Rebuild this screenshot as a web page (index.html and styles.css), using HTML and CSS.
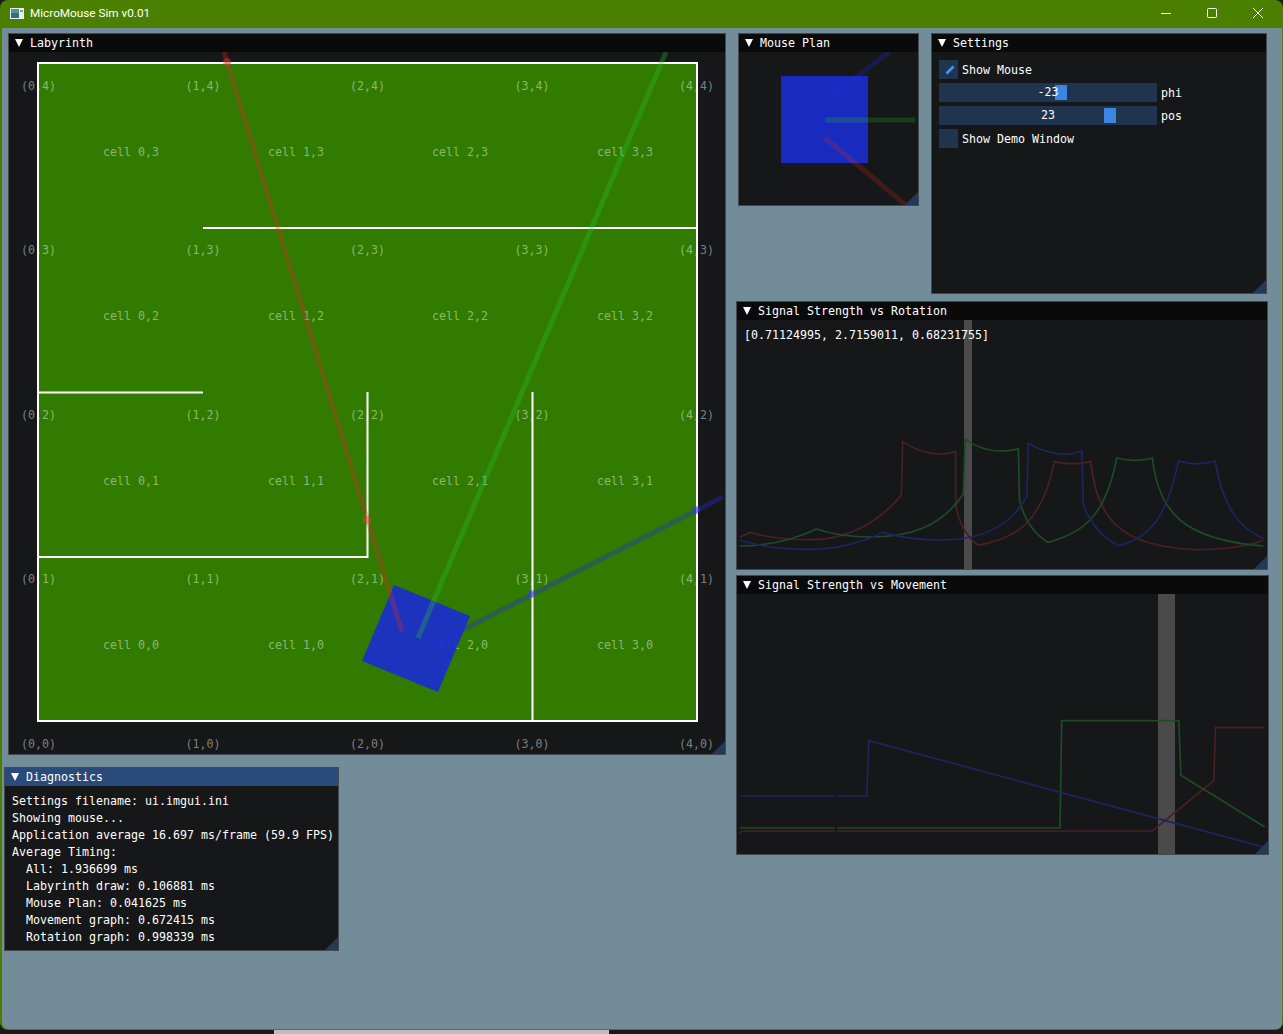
FILE: index.html
```html
<!DOCTYPE html>
<html lang="en">
<head>
<meta charset="UTF-8">
<meta name="viewport" content="width=device-width, initial-scale=1.0">
<title>MicroMouse Sim v0.01</title>
<link rel="stylesheet" href="styles.css">
</head>
<body>

<div class="app">
    <div class="titlebar">
        <svg class="app-icon" width="14" height="11" viewBox="0 0 14 11">
            <rect x="0" y="0" width="14" height="11" fill="#e8eef0"/>
            <rect x="1" y="1" width="8" height="9" fill="#2f6f86"/>
            <rect x="1" y="1" width="8" height="4" fill="#4f9a8c"/>
            <rect x="10" y="2" width="3" height="2" fill="#8a9aa4"/>
        </svg>
        <span class="app-name">MicroMouse Sim v0.01</span>
        <div class="caption-buttons">
            <svg class="caption-btn" width="10" height="10" viewBox="0 0 10 10"><path d="M0 5.5H10" stroke="#fff" fill="none"/></svg>
            <svg class="caption-btn" width="10" height="10" viewBox="0 0 10 10"><rect x="0.5" y="0.5" width="9" height="9" rx="1" stroke="#fff" fill="none"/></svg>
            <svg class="caption-btn" width="10" height="10" viewBox="0 0 10 10"><path d="M0 0L10 10M10 0L0 10" stroke="#fff" fill="none"/></svg>
        </div>
    </div>

    <div class="desk">

        <!-- labyrinth -->
        <div class="win win-labyrinth">
            <div class="win-title"><i class="arrow"></i>Labyrinth</div>
            <svg class="win-canvas" viewBox="9 52 716 702">
                <rect class="floor" x="39" y="63" width="658" height="658"/>
                <path class="wall" d="M38 63H697V721H38ZM203 228H697M38 392.5H203M367.5 392V557H38M532.5 392V721"/>

                <g class="lbl">
                    <text x="38.5" y="90">(0,4)</text><text x="203" y="90">(1,4)</text><text x="367.5" y="90">(2,4)</text><text x="532" y="90">(3,4)</text><text x="696.5" y="90">(4,4)</text>
                    <text x="38.5" y="254">(0,3)</text><text x="203" y="254">(1,3)</text><text x="367.5" y="254">(2,3)</text><text x="532" y="254">(3,3)</text><text x="696.5" y="254">(4,3)</text>
                    <text x="38.5" y="419">(0,2)</text><text x="203" y="419">(1,2)</text><text x="367.5" y="419">(2,2)</text><text x="532" y="419">(3,2)</text><text x="696.5" y="419">(4,2)</text>
                    <text x="38.5" y="583">(0,1)</text><text x="203" y="583">(1,1)</text><text x="367.5" y="583">(2,1)</text><text x="532" y="583">(3,1)</text><text x="696.5" y="583">(4,1)</text>
                    <text x="38.5" y="748">(0,0)</text><text x="203" y="748">(1,0)</text><text x="367.5" y="748">(2,0)</text><text x="532" y="748">(3,0)</text><text x="696.5" y="748">(4,0)</text>

                    <text x="131" y="156">cell 0,3</text><text x="296" y="156">cell 1,3</text><text x="460" y="156">cell 2,3</text><text x="625" y="156">cell 3,3</text>
                    <text x="131" y="320">cell 0,2</text><text x="296" y="320">cell 1,2</text><text x="460" y="320">cell 2,2</text><text x="625" y="320">cell 3,2</text>
                    <text x="131" y="485">cell 0,1</text><text x="296" y="485">cell 1,1</text><text x="460" y="485">cell 2,1</text><text x="625" y="485">cell 3,1</text>
                    <text x="131" y="649">cell 0,0</text><text x="296" y="649">cell 1,0</text><text x="460" y="649">cell 2,0</text><text x="625" y="649">cell 3,0</text>
                </g>

                <polygon class="mouse" points="394,585 470,616 438,692 362,661"/>
                <path class="beam beam-r" d="M402 632L224 52"/>
                <path class="beam beam-g" d="M418 638L666 52"/>
                <path class="beam beam-b" d="M433 645L723 497"/>
                <circle class="hit-r" cx="227" cy="62" r="4"/>
                <circle class="hit-r" cx="367" cy="520" r="4"/>
                <circle class="hit-b" cx="531" cy="594" r="4"/>
                <circle class="hit-b" cx="696" cy="510" r="4"/>
            </svg>
            <i class="grip"></i>
        </div>

        <!-- mouse plan -->
        <div class="win win-plan">
            <div class="win-title"><i class="arrow"></i>Mouse Plan</div>
            <svg class="win-canvas" viewBox="739 52 179 153">
                <rect class="mouse" x="781" y="76" width="87" height="87"/>
                <path class="beam beam-r" d="M825 138L907 206"/>
                <path class="beam beam-g" d="M825 120H915"/>
                <path class="beam beam-b" d="M825 102L889 52"/>
            </svg>
            <i class="grip"></i>
        </div>

        <!-- settings -->
        <div class="win win-settings">
            <div class="win-title"><i class="arrow"></i>Settings</div>
            <div class="settings-body">
                <div class="row">
                    <span class="check">
                        <svg width="19" height="19" viewBox="0 0 19 19"><path d="M7.5 13.5L14.5 6.5" stroke="#4296fa" stroke-width="2.6" fill="none"/></svg>
                    </span>
                    <span>Show Mouse</span>
                </div>
                <div class="row">
                    <div class="slider"><span class="slider-val">-23</span><i class="grab grab-phi"></i></div>
                    <span>phi</span>
                </div>
                <div class="row">
                    <div class="slider"><span class="slider-val">23</span><i class="grab grab-pos"></i></div>
                    <span>pos</span>
                </div>
                <div class="row">
                    <span class="check"></span>
                    <span>Show Demo Window</span>
                </div>
            </div>
            <i class="grip"></i>
        </div>

        <!-- rotation graph -->
        <div class="win win-rotation">
            <div class="win-title"><i class="arrow"></i>Signal Strength vs Rotation</div>
            <div class="graph-body">
                <i class="cursor cursor-rot"></i>
                <div class="readout">[0.71124995, 2.7159011, 0.68231755]</div>
                <svg class="graph" viewBox="20 90 1503 747" preserveAspectRatio="none">
                    <path class="trace trace-r" d="M28 742L57 727C100 742 160 749 230 749C330 749 420 700 486 615L490 455C530 485 590 503 640 485L640 640C645 690 670 740 703 766C810 745 885 700 920 515Q970 528 1023 515C1040 680 1100 770 1320 779C1400 779 1470 768 1513 750"/>
                    <path class="trace trace-g" d="M28 768C100 768 170 755 245 717C290 733 340 741 400 741C510 741 600 710 662 612L667 448C700 472 750 495 818 476L821 630C835 690 860 730 902 757C1000 730 1065 680 1097 504Q1150 518 1198 504C1215 670 1290 750 1513 768"/>
                    <path class="trace trace-b" d="M28 750C90 772 160 778 230 778C310 778 380 755 435 727C480 742 540 750 600 750C700 750 790 720 842 620L846 460C890 488 950 503 998 483L1002 642C1020 700 1060 745 1102 767C1190 745 1240 680 1272 513Q1325 530 1376 513C1395 640 1440 715 1513 745"/>
                </svg>
            </div>
            <i class="grip"></i>
        </div>

        <!-- movement graph -->
        <div class="win win-movement">
            <div class="win-title"><i class="arrow"></i>Signal Strength vs Movement</div>
            <div class="graph-body">
                <i class="cursor cursor-mov"></i>
                <svg class="graph" viewBox="20 72 1506 780" preserveAspectRatio="none">
                    <path class="trace trace-r" d="M28 792L32 785L40 783H298M304 783H1198L1372 632L1377 473H1517"/>
                    <path class="trace trace-g" d="M28 774H298M304 774H936L941 452H1273L1279 616L1517 771"/>
                    <path class="trace trace-b" d="M28 678H298M304 678H388L394 512L1517 832"/>
                </svg>
            </div>
            <i class="grip"></i>
        </div>

        <!-- diagnostics -->
        <div class="win win-diag">
            <div class="win-title win-title-active"><i class="arrow"></i>Diagnostics</div>
            <div class="diag-body">
                <div>Settings filename: ui.imgui.ini</div>
                <div>Showing mouse...</div>
                <div>Application average 16.697 ms/frame (59.9 FPS)</div>
                <div>Average Timing:</div>
                <div class="indent">All: 1.936699 ms</div>
                <div class="indent">Labyrinth draw: 0.106881 ms</div>
                <div class="indent">Mouse Plan: 0.041625 ms</div>
                <div class="indent">Movement graph: 0.672415 ms</div>
                <div class="indent">Rotation graph: 0.998339 ms</div>
            </div>
            <i class="grip"></i>
        </div>

    </div>
</div>

<div class="taskbar"><div class="taskbar-thumb"></div></div>

</body>
</html>
```

FILE: styles.css
```css
html, body {
    margin: 0;
    height: 100%;
    overflow: hidden;
}
body {
    background-color: #1a1a1a;
    font-family: "DejaVu Sans Mono", "Liberation Mono", monospace;
    font-size: 11.63px;
    color: #fff;
}
.app {
    height: 1030px;
    box-sizing: border-box;
    display: flex;
    flex-direction: column;
    background-color: #4b7f00;
    border-radius: 8px;
    padding: 0 1px 1px 2px;
}
.titlebar {
    height: 28px;
    flex: none;
    display: flex;
    align-items: flex-start;
    padding: 8px 0 0 8px;
    box-sizing: border-box;
}
.app-name {
    margin-left: 6px;
    font-family: Roboto, "Noto Sans", sans-serif;
    font-size: 11.75px;
    line-height: 11px;
}
.caption-buttons {
    margin-left: auto;
    display: flex;
    gap: 36px;
    padding-right: 19px;
}
.desk {
    flex: 1;
    position: relative;
    background-color: #738c99;
    border-radius: 0 0 6px 6px;
}

/* imgui windows, placed on the desk */
.win {
    position: absolute;
    box-sizing: border-box;
    display: flex;
    flex-direction: column;
    background-color: #151718;
    border: 1px solid #45494f;
}
.win-labyrinth { left: 6px; top: 5px; width: 718px; height: 722px; }
.win-plan { left: 736px; top: 5px; width: 181px; height: 173px; }
.win-settings { left: 929px; top: 5px; width: 336px; height: 261px; }
.win-rotation { left: 734px; top: 273px; width: 532px; height: 269px; }
.win-movement { left: 734px; top: 547px; width: 533px; height: 280px; }
.win-diag { left: 2px; top: 739px; width: 335px; height: 184px; }

.win-title {
    height: 18px;
    flex: none;
    background-color: #0a0a0a;
    display: flex;
    align-items: center;
    padding-left: 6px;
    white-space: pre;
}
.win-title-active {
    background-color: #294a7a;
}
.arrow {
    width: 0;
    height: 0;
    border-left: 4.5px solid transparent;
    border-right: 4.5px solid transparent;
    border-top: 8px solid #fff;
    margin-right: 7px;
}
.grip {
    position: absolute;
    right: 0;
    bottom: 0;
    width: 0;
    height: 0;
    border-left: 13px solid transparent;
    border-bottom: 13px solid #213a58;
}
.win-canvas {
    flex: 1;
    display: block;
    min-height: 0;
    width: 100%;
    overflow: hidden;
}

/* labyrinth */
.floor { fill: #317c00; }
.wall { fill: none; stroke: #fff; stroke-width: 2; }
.lbl text {
    fill: rgba(255, 255, 255, 0.45);
    text-anchor: middle;
    font-size: 11.63px;
}
.mouse { fill: #1a2ecd; opacity: 0.92; }
.beam { fill: none; stroke-width: 5; }
.beam-r { stroke: rgba(220, 40, 40, 0.3); }
.beam-g { stroke: rgba(40, 200, 40, 0.3); }
.beam-b { stroke: rgba(40, 40, 220, 0.35); }
.win-plan .beam { opacity: 0.75; }
.hit-r { fill: rgba(230, 60, 60, 0.4); }
.hit-b { fill: rgba(60, 60, 230, 0.45); }

/* settings */
.settings-body {
    display: flex;
    flex-direction: column;
    gap: 4px;
    padding: 8px 7px;
}
.row {
    display: flex;
    align-items: center;
    gap: 4px;
    height: 19px;
}
.check {
    width: 19px;
    height: 19px;
    background-color: #21344f;
}
.slider {
    position: relative;
    width: 218px;
    height: 19px;
    background-color: #21344f;
    text-align: center;
    line-height: 19px;
}
.slider-val {
    position: relative;
    z-index: 1;
}
.grab {
    position: absolute;
    top: 2px;
    width: 12px;
    height: 15px;
    background-color: #3d85e0;
}
.grab-phi { left: 116px; }
.grab-pos { left: 165px; }

/* graphs */
.graph-body {
    position: relative;
    flex: 1;
    min-height: 0;
}
.graph {
    position: absolute;
    left: 0;
    top: 0;
    width: 100%;
    height: 100%;
}
.trace {
    fill: none;
    stroke-width: 1.7;
    vector-effect: non-scaling-stroke;
}
.trace-r { stroke: #4a2025; }
.trace-g { stroke: #1f4a26; }
.trace-b { stroke: #20245e; }
.cursor {
    position: absolute;
    top: 0;
    bottom: 0;
    background-color: #4a4a4a;
}
.cursor-rot { left: 227px; width: 8px; }
.cursor-mov { left: 421px; width: 17px; }
.readout {
    position: absolute;
    left: 7px;
    top: 8px;
    z-index: 1;
}

/* diagnostics */
.diag-body {
    padding: 7px 7px;
    line-height: 17px;
    white-space: nowrap;
}
.indent {
    padding-left: 14px;
}

/* strip of the desktop showing under the window */
.taskbar {
    height: 4px;
    position: relative;
}
.taskbar-thumb {
    position: absolute;
    left: 274px;
    width: 335px;
    height: 4px;
    background-color: #bdbdbd;
}
```
